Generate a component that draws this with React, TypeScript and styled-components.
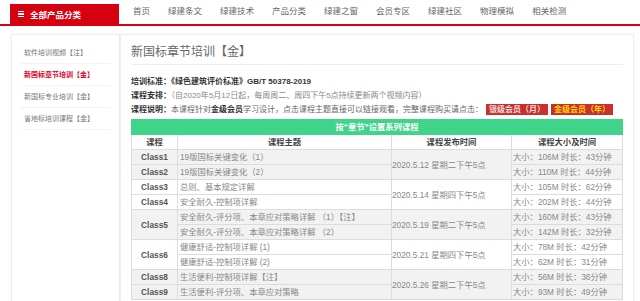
import styled, { createGlobalStyle } from 'styled-components'

const GlobalStyle = createGlobalStyle`
  html, body {
    margin: 0;
    padding: 0;
    background: #fff;
    font-family: "Liberation Sans", Arial, "Noto Sans CJK SC", sans-serif;
    color: #555;
  }
`

const TopBar = styled.div`
  display: flex;
  align-items: flex-end;
  height: 24px;
  border-bottom: 2px solid #d7000f;
`

const Category = styled.div`
  display: flex;
  align-items: center;
  gap: 6px;
  width: 101px;
  height: 20px;
  margin-left: 10px;
  padding-left: 8px;
  background: #d7000f;
  color: #fff;
  font-size: 8.5px;
  font-weight: 700;
`

const Burger = styled.span`
  display: flex;
  flex-direction: column;
  gap: 1.5px;

  & > i {
    display: block;
    width: 6px;
    height: 1.2px;
    background: #fff;
  }
`

const Nav = styled.div`
  display: flex;
  gap: 18px;
  margin-left: 14px;
  height: 20px;
  align-items: center;
  padding-bottom: 4px;
  font-size: 8.5px;
  color: #666;
`

const Body = styled.div`
  display: flex;
  padding: 8px 6px 0 11px;
`

const Sidebar = styled.div`
  width: 107px;
  min-height: 280px;
  padding-top: 7px;
  background: #fff;
  border: 1px solid #eee;
  box-shadow: 0 0 3px rgba(0, 0, 0, 0.05);
`

const SideItem = styled.div<{ $active?: boolean }>`
  height: 21px;
  line-height: 21px;
  margin: 0 9px;
  padding-left: 3px;
  border-bottom: 1px solid #f3f3f3;
  font-size: 7px;
  color: ${p => (p.$active ? '#e4002b' : '#777')};
  font-weight: ${p => (p.$active ? 700 : 400)};
`

const Main = styled.div`
  flex: 1;
  padding: 0 10px;
  background: #fff;
  border: 1px solid #eee;
  box-shadow: 0 0 3px rgba(0, 0, 0, 0.06);
`

const Title = styled.div`
  padding: 8px 0 3px;
  line-height: 18px;
  font-size: 12px;
  color: #666;
  border-bottom: 1px solid #eee;
`

const Info = styled.div`
  margin: 10px 0 2px;
  font-size: 8px;
  line-height: 14px;
  color: #888;
  white-space: nowrap;
`

const Label = styled.b`
  color: #333;
`

const Strong = styled.b`
  color: #333;
`

const Note = styled.span`
  color: #666;
`

const Badge = styled.span<{ $gold?: boolean }>`
  margin-left: 3px;
  padding: 1px 3px;
  background: #c9302c;
  color: ${p => (p.$gold ? '#ffd400' : '#eadada')};
  font-weight: 700;
`

const Table = styled.table`
  width: 100%;
  border-collapse: collapse;
  font-size: 8.3px;
  color: #888;

  td, th {
    height: 14px;
    line-height: 14px;
    padding: 0;
    border: 1px solid #dcdcdc;
    white-space: nowrap;
  }
`

const Caption = styled.th`
  background: #3fd48a;
  color: #fff;
  font-weight: 700;
  border-color: #3fd48a !important;
`

const Head = styled.th`
  background: #fff;
  color: #444;
  font-weight: 700;
`

const Row = styled.tr<{ $gray?: boolean }>`
  background: ${p => (p.$gray ? '#f2f2f2' : '#fff')};
`

const ClassCell = styled.td`
  text-align: center;
  font-weight: 700;
  color: #555;
`

const Topic = styled.td`
  padding-left: 2px !important;
`

const DateCell = styled.td`
  padding-left: 0 !important;
  color: #888;
`

const SizeCell = styled.td`
  padding-left: 1px !important;
`

type Lesson = { name: string; topics: string[]; sizes: string[] }
type Group = { date: string; lessons: Lesson[] }

const groups: Group[] = [
  {
    date: '2020.5.12 星期二下午5点',
    lessons: [
      { name: 'Class1', topics: ['19版国标关键变化（1）'], sizes: ['大小：106M 时长：43分钟'] },
      { name: 'Class2', topics: ['19版国标关键变化（2）'], sizes: ['大小：110M 时长：44分钟'] },
    ],
  },
  {
    date: '2020.5.14 星期四下午5点',
    lessons: [
      { name: 'Class3', topics: ['总则、基本规定详解'], sizes: ['大小：105M 时长：62分钟'] },
      { name: 'Class4', topics: ['安全耐久-控制项详解'], sizes: ['大小：202M 时长：44分钟'] },
    ],
  },
  {
    date: '2020.5.19 星期二下午5点',
    lessons: [
      {
        name: 'Class5',
        topics: ['安全耐久-评分项、本章应对策略详解 （1）【注】', '安全耐久-评分项、本章应对策略详解 （2）'],
        sizes: ['大小：160M 时长：43分钟', '大小：142M 时长：32分钟'],
      },
    ],
  },
  {
    date: '2020.5.21 星期四下午5点',
    lessons: [
      {
        name: 'Class6',
        topics: ['健康舒适-控制项详解 (1)', '健康舒适-控制项详解 (2)'],
        sizes: ['大小：78M 时长：42分钟', '大小：62M 时长：31分钟'],
      },
    ],
  },
  {
    date: '2020.5.26 星期二下午5点',
    lessons: [
      { name: 'Class8', topics: ['生活便利-控制项详解【注】'], sizes: ['大小：56M 时长：36分钟'] },
      { name: 'Class9', topics: ['生活便利-评分项、本章应对策略'], sizes: ['大小：93M 时长：49分钟'] },
    ],
  },
]

const navItems = ['首页', '绿建条文', '绿建技术', '产品分类', '绿建之窗', '会员专区', '绿建社区', '物理模拟', '相关检测']

const App = () => {
  return (
    <>
      <GlobalStyle />
      <TopBar>
        <Category>
          <Burger><i /><i /><i /></Burger>
          全部产品分类
        </Category>
        <Nav>
          {navItems.map(n => <span key={n}>{n}</span>)}
        </Nav>
      </TopBar>
      <Body>
        <Sidebar>
          <SideItem>软件培训视频【注】</SideItem>
          <SideItem $active>新国标章节培训【金】</SideItem>
          <SideItem>新国标专业培训【金】</SideItem>
          <SideItem>省地标培训课程【金】</SideItem>
        </Sidebar>
        <Main>
          <Title>新国标章节培训【金】</Title>
          <Info>
            <div>
              <Label>培训标准：</Label><Strong>《绿色建筑评价标准》GB/T 50378-2019</Strong>
            </div>
            <div>
              <Label>课程安排：</Label>（自2020年5月12日起，每周周二、周四下午5点持续更新两个视频内容）
            </div>
            <div>
              <Label>课程说明：</Label>
              <Note>
                本课程针对<Strong>金级会员</Strong>学习设计，点击课程主题直接可以链接观看，完整课程购买请点击：
              </Note>
              <Badge>银级会员（月）</Badge>
              <Badge $gold>金级会员（年）</Badge>
            </div>
          </Info>
          <Table>
            <colgroup>
              <col style={{ width: 46 }} />
              <col style={{ width: 214 }} />
              <col style={{ width: 120 }} />
              <col />
            </colgroup>
            <tbody>
              <tr>
                <Caption colSpan={4}>按“章节”设置系列课程</Caption>
              </tr>
              <tr>
                <Head>课程</Head>
                <Head>课程主题</Head>
                <Head>课程发布时间</Head>
                <Head>课程大小及时间</Head>
              </tr>
              {groups.map((g, gi) => {
                const gray = gi % 2 === 0
                const span = g.lessons.reduce((s, l) => s + l.topics.length, 0)
                const rows: JSX.Element[] = []
                g.lessons.forEach((l, li) => {
                  l.topics.forEach((t, ti) => {
                    rows.push(
                      <Row key={`${gi}-${li}-${ti}`} $gray={gray}>
                        {ti === 0 && <ClassCell rowSpan={l.topics.length}>{l.name}</ClassCell>}
                        <Topic>{t}</Topic>
                        {li === 0 && ti === 0 && <DateCell rowSpan={span}>{g.date}</DateCell>}
                        <SizeCell>{l.sizes[ti]}</SizeCell>
                      </Row>
                    )
                  })
                })
                return rows
              })}
            </tbody>
          </Table>
        </Main>
      </Body>
    </>
  )
}

export default App
